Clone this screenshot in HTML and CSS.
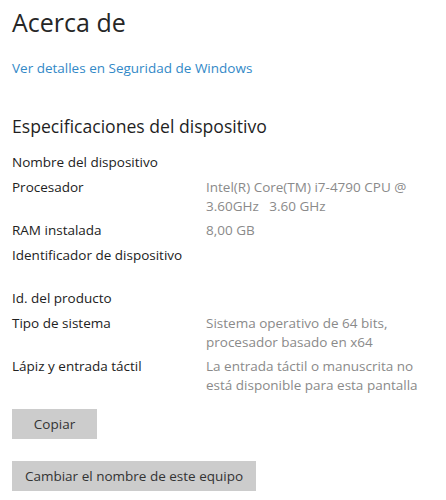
FILE: index.html
```html
<!DOCTYPE html>
<html lang="es">
  <head>
    <meta charset="UTF-8" />
    <meta name="viewport" content="width=device-width, initial-scale=1.0" />
    <title>Acerca de</title>
    <link rel="stylesheet" href="styles.css">
  </head>
  <body>
    <div class="about-page">
      <h1>Acerca de</h1>
      <a class="security-link" href="#">Ver detalles en Seguridad de Windows</a>

      <h2>Especificaciones del dispositivo</h2>
      <div class="spec-list">
        <span class="spec-label">Nombre del dispositivo</span>
        <span class="spec-value"></span>

        <span class="spec-label">Procesador</span>
        <span class="spec-value">Intel(R) Core(TM) i7-4790 CPU @ 3.60GHz&nbsp;&nbsp; 3.60 GHz</span>

        <span class="spec-label">RAM instalada</span>
        <span class="spec-value">8,00 GB</span>

        <span class="spec-label">Identificador de dispositivo</span>
        <span class="spec-value blank"></span>

        <span class="spec-label">Id. del producto</span>
        <span class="spec-value"></span>

        <span class="spec-label">Tipo de sistema</span>
        <span class="spec-value">Sistema operativo de 64 bits, procesador basado en x64</span>

        <span class="spec-label">Lápiz y entrada táctil</span>
        <span class="spec-value">La entrada táctil o manuscrita no está disponible para esta pantalla</span>
      </div>

      <button class="btn copy-btn" type="button">Copiar</button>
      <button class="btn rename-btn" type="button">Cambiar el nombre de este equipo</button>
    </div>
  </body>
</html>
```

FILE: styles.css
```css
body {
  margin: 0;
  background-color: #fff;
  font-family: "Open Sans", "Noto Sans", sans-serif;
  color: #222;
}
.about-page {
  padding: 7px 12px 0;
  display: flex;
  flex-direction: column;
  align-items: flex-start;
}
h1 {
  margin: 0;
  font-size: 25px;
  font-weight: 400;
  line-height: 30px;
  color: #262626;
}
.security-link {
  margin-top: 22px;
  font-size: 13.5px;
  line-height: 19px;
  color: #3289c7;
  text-decoration: none;
}
h2 {
  margin: 36px 0 0;
  font-size: 17.6px;
  font-weight: 400;
  line-height: 24px;
  color: #1f1f1f;
}
.spec-list {
  margin-top: 15px;
  display: grid;
  grid-template-columns: 194px 220px;
  row-gap: 5.5px;
  font-size: 13.5px;
  line-height: 19px;
}
.spec-value {
  color: #8a8a8a;
}
.spec-value.blank {
  min-height: 38px;
}
.btn {
  border: none;
  background-color: #cccccc;
  color: #333;
  font-family: inherit;
  font-size: 13.5px;
  height: 30px;
  cursor: pointer;
}
.copy-btn {
  margin-top: 14px;
  width: 85px;
}
.rename-btn {
  margin-top: 22px;
  width: 244px;
}
```
